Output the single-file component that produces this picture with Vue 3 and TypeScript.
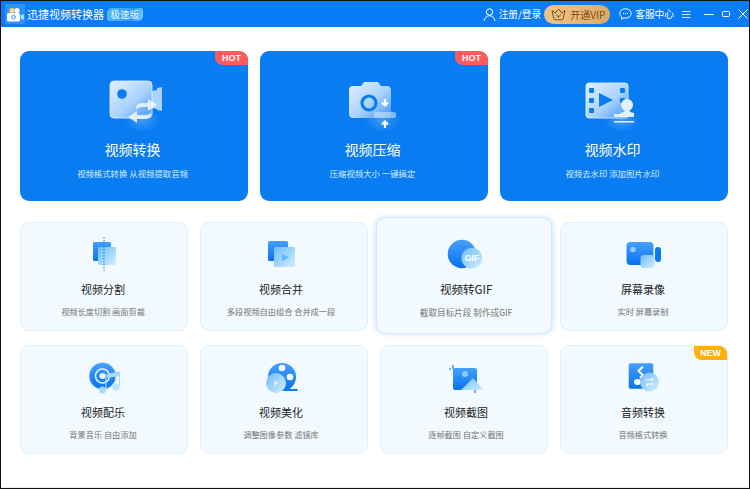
<script setup lang="ts">
type Tool = {
  id: string;
  title: string;
  desc: string;
  badge?: "HOT" | "NEW";
  active?: boolean;
};

const mainTools: Tool[] = [
  { id: "convert", title: "视频转换", desc: "视频格式转换 从视频提取音频", badge: "HOT" },
  { id: "compress", title: "视频压缩", desc: "压缩视频大小 一键搞定", badge: "HOT" },
  { id: "watermark", title: "视频水印", desc: "视频去水印 添加图片水印" }
];

const tools: Tool[] = [
  { id: "split", title: "视频分割", desc: "视频长度切割 画面剪裁" },
  { id: "merge", title: "视频合并", desc: "多段视频自由组合 合并成一段" },
  { id: "gif", title: "视频转GIF", desc: "截取目标片段 制作成GIF", active: true },
  { id: "record", title: "屏幕录像", desc: "实时 屏幕录制" },
  { id: "music", title: "视频配乐", desc: "背景音乐 自由添加" },
  { id: "beautify", title: "视频美化", desc: "调整图像参数 滤镜库" },
  { id: "shot", title: "视频截图", desc: "逐帧截图 自定义截图" },
  { id: "audio", title: "音频转换", desc: "音频格式转换", badge: "NEW" }
];
</script>

<template>
  <div class="window">
    <header class="titlebar">
      <div class="brand">
        <span class="logo" aria-hidden="true">
          <svg width="18" height="15" viewBox="0 0 18 15">
            <circle cx="6" cy="3.500" r="2.600" fill="#ffd36b" />
            <circle cx="11" cy="3.500" r="2.600" fill="#fff" />
            <rect x="1" y="6" width="13" height="8.500" rx="1.500" fill="#fff" />
            <path d="M14.500 8.500 18 7v6l-3.500-1.500z" fill="#9fe0ff" />
            <circle cx="7.500" cy="10.200" r="1.800" fill="none" stroke="#2b8cf5" />
          </svg>
        </span>
        <span class="app-name">迅捷视频转换器</span>
        <span class="edition">极速版</span>
      </div>
      <div class="actions">
        <span class="action login">
          <svg width="13" height="13" viewBox="0 0 13 13" fill="none" stroke="#fff" stroke-width="1">
            <circle cx="6.500" cy="4" r="3.200" />
            <path d="M1 12.800c.6-3 2.800-5.100 5.500-5.100s4.900 2.100 5.500 5.100" />
          </svg>
          注册/登录
        </span>
        <button type="button" class="vip">
          <svg width="15" height="13" viewBox="0 0 15 13" fill="none" stroke="#7c4d1c" stroke-width="1">
            <path d="M1 2.500 4.300 5 7.500 1l3.200 4L14 2.500l-1.800 8.200a1.500 1.500 0 0 1-1.400 1.100H4.200a1.500 1.500 0 0 1-1.400-1.100z" />
            <path d="M5.500 6.500 7.500 9.500l2-3" />
          </svg>
          开通VIP
        </button>
        <span class="action service">
          <svg width="13" height="12" viewBox="0 0 13 12" fill="none" stroke="#fff" stroke-width="1">
            <path d="M6.500 .8c3.200 0 5.700 2.100 5.700 4.700s-2.500 4.600-5.700 4.600c-.6 0-1.100 0-1.600-.2L2.600 11.300l.2-2.200C1.500 8.200.8 6.900.8 5.500.8 2.900 3.300.8 6.500.8z" />
            <path d="M4 5.500h1M6 5.500h1M8 5.500h1" />
          </svg>
          客服中心
        </span>
        <div class="window-controls" aria-hidden="true">
          <svg width="9" height="9" viewBox="0 0 9 9" stroke="#d7eaff" fill="none"><path d="M0 1.500h8.500M0 4.500h8.500M0 7.500h8.500" /></svg>
          <svg class="min" width="10" height="10" viewBox="0 0 10 10" stroke="#fff" fill="none"><path d="M0 5.500h9.500" /></svg>
          <svg class="max" width="10" height="10" viewBox="0 0 10 10" stroke="#fff" fill="none"><rect x="1.500" y="2.500" width="7" height="5" rx="1" /></svg>
          <svg class="close" width="10" height="10" viewBox="0 0 10 10" stroke="#fff" fill="none"><path d="m.5.500 9 9m0-9-9 9" /></svg>
        </div>
      </div>
    </header>

    <main class="content">
      <section class="main-tools">
        <article v-for="tool in mainTools" :key="tool.id" class="main-card">
          <span v-if="tool.badge" class="badge hot">{{ tool.badge }}</span>
          <svg class="main-icon" width="60" height="60" viewBox="0 0 60 60" aria-hidden="true">
            <defs>
              <linearGradient :id="`main-${tool.id}`" x1="0" y1="0" x2="1" y2="1">
                <stop offset="0" stop-color="#e2f0ff" />
                <stop offset=".55" stop-color="#aad3fd" />
                <stop offset="1" stop-color="#3f96f6" />
              </linearGradient>
              <radialGradient :id="`glow-${tool.id}`">
                <stop offset="0" stop-color="#fff" stop-opacity=".22" />
                <stop offset="1" stop-color="#fff" stop-opacity="0" />
              </radialGradient>
            </defs>
            <ellipse cx="38" cy="44" rx="18" ry="12" :fill="`url(#glow-${tool.id})`" />
            <template v-if="tool.id === 'convert'">
              <path d="M48 15l5-1v-2l5-1v24l-5-1v-1l-5-1z" fill="#a9d2fd" />
              <rect x="6" y="5" width="42" height="37" rx="4" :fill="`url(#main-${tool.id})`" stroke="#eaf4ff" stroke-width=".8" />
              <circle cx="18" cy="18" r="4.800" fill="#0a7cf2" />
              <path d="M32 34v-2c0-3 3-5 6-5h6v-4l9 6-9 6v-4h-6c-3 0-5 1-6 3z" fill="#fff" opacity=".78" />
              <path d="M47 36v2c0 3-3 5-6 5h-8v4l-9-6 9-6v4h8c3 0 5-1 6-3z" fill="#fff" opacity=".78" />
            </template>
            <template v-else-if="tool.id === 'compress'">
              <path d="M5 14a4 4 0 0 1 4-4h8l3-4h14l3 4h6a4 4 0 0 1 4 4v24a4 4 0 0 1-4 4H9a4 4 0 0 1-4-4z" :fill="`url(#main-${tool.id})`" />
              <circle cx="25" cy="27" r="7" fill="none" stroke="#0a7cf2" stroke-width="3.200" />
              <path d="M41 23v6m-3-2.500 3 3 3-3" stroke="#fff" stroke-width="2.200" fill="none" />
              <rect x="30" y="36" width="22" height="6" rx="2" fill="#d8eaff" opacity=".55" />
              <path d="M41 52v-6m-3 2.500 3-3 3 3" stroke="#fff" stroke-width="2.200" fill="none" />
            </template>
            <template v-else>
              <rect x="2" y="7" width="42" height="35" rx="3" :fill="`url(#main-${tool.id})`" stroke="#eaf4ff" stroke-width=".8" />
              <g fill="#0a7cf2">
                <rect x="5" y="12" width="5" height="5" rx="1" />
                <rect x="5" y="22" width="5" height="5" rx="1" />
                <rect x="5" y="32" width="5" height="5" rx="1" />
                <rect x="36" y="12" width="5" height="5" rx="1" />
                <rect x="36" y="22" width="5" height="5" rx="1" />
                <path d="M15 17l14 7-14 7z" />
              </g>
              <circle cx="43" cy="29" r="6" fill="#e4f1ff" />
              <path d="M41 33h4l1 3 4 1v1.500H36V37l4-1z" fill="#e4f1ff" />
              <rect x="30" y="38" width="20" height="3" rx="1" fill="#e4f1ff" />
              <rect x="30" y="45" width="20" height="1.500" fill="#e4f1ff" />
            </template>
          </svg>
          <h2>{{ tool.title }}</h2>
          <p>{{ tool.desc }}</p>
        </article>
      </section>

      <section class="tools">
        <article v-for="tool in tools" :key="tool.id" class="tool-card" :class="{ active: tool.active }">
          <span v-if="tool.badge" class="badge new">{{ tool.badge }}</span>
          <svg class="tool-icon" width="40" height="40" viewBox="0 0 40 40" aria-hidden="true">
            <defs>
              <linearGradient :id="`dark-${tool.id}`" x1="0" y1="0" x2="0" y2="1">
                <stop offset="0" stop-color="#47a0fb" />
                <stop offset="1" stop-color="#0672f0" />
              </linearGradient>
              <linearGradient :id="`light-${tool.id}`" x1="0" y1="0" x2="1" y2="1">
                <stop offset="0" stop-color="#6fbcfd" />
                <stop offset="1" stop-color="#d3eeff" />
              </linearGradient>
            </defs>
            <template v-if="tool.id === 'split'">
              <rect x="9" y="8" width="18" height="19" rx="1.500" :fill="`url(#dark-${tool.id})`" />
              <rect x="14" y="13" width="18" height="18" rx="1.500" :fill="`url(#light-${tool.id})`" />
              <path d="M20 3v34" stroke="#0a7cf2" stroke-dasharray="1.500 1.500" />
            </template>
            <template v-else-if="tool.id === 'merge'">
              <rect x="4" y="7" width="20" height="20" rx="1.500" :fill="`url(#dark-${tool.id})`" />
              <rect x="10" y="13" width="21" height="20" rx="1.500" :fill="`url(#light-${tool.id})`" />
              <path d="M18 20l7 3.500-7 3.500z" fill="#5fb6fd" />
            </template>
            <template v-else-if="tool.id === 'gif'">
              <circle cx="18" cy="21" r="13.500" :fill="`url(#dark-${tool.id})`" />
              <circle cx="27.500" cy="25" r="10" :fill="`url(#light-${tool.id})`" />
              <text x="27.500" y="28" text-anchor="middle" class="gif-text">GIF</text>
            </template>
            <template v-else-if="tool.id === 'record'">
              <rect x="2.500" y="8" width="27" height="23" rx="4" :fill="`url(#dark-${tool.id})`" />
              <rect x="31" y="13" width="6" height="15" rx="3" fill="#0a7cf2" />
              <circle cx="9" cy="15.500" r="2.800" fill="#8ccbfe" />
              <rect x="16.500" y="21" width="14" height="13" rx="3" :fill="`url(#light-${tool.id})`" />
            </template>
            <template v-else-if="tool.id === 'music'">
              <circle cx="18.500" cy="19" r="13.500" :fill="`url(#dark-${tool.id})`" stroke="#bfe2ff" stroke-width=".8" />
              <circle cx="18.500" cy="19" r="7" fill="none" stroke="#e9f5ff" stroke-width="1.500" />
              <circle cx="18.500" cy="19" r="3" fill="#e9f5ff" />
              <path d="M23 17l13-2.500v4.500L23 21z" fill="#a9d8fe" />
              <path d="M22 17v15M35.500 14.500v15" stroke="#a9d8fe" stroke-width="1.200" />
              <circle cx="18.500" cy="33" r="3.500" fill="#a9d8fe" />
              <circle cx="32" cy="30" r="3.500" fill="#bfe2ff" />
            </template>
            <template v-else-if="tool.id === 'beautify'">
              <circle cx="18" cy="20" r="14" :fill="`url(#dark-${tool.id})`" />
              <circle cx="18" cy="11" r="3.300" fill="#f3faff" />
              <circle cx="26" cy="20" r="3.300" fill="#f3faff" />
              <path d="M21 33h12.500" stroke="#0a7cf2" stroke-width="1.800" />
              <circle cx="12" cy="26" r="10" :fill="`url(#light-${tool.id})`" />
              <path d="M10 23l5 3-5 3z" fill="#d9f0ff" />
            </template>
            <template v-else-if="tool.id === 'shot'">
              <rect x="9" y="11" width="24" height="22" rx="2" :fill="`url(#dark-${tool.id})`" />
              <path d="M9 8v4M31 33v3" stroke="#0a7cf2" stroke-width="1.200" />
              <circle cx="6" cy="12" r="1" fill="#4aa5fb" />
              <circle cx="21" cy="17" r="3" fill="#8ccbfe" />
              <path d="M17 33l12-12 11 12z" :fill="`url(#light-${tool.id})`" />
            </template>
            <template v-else>
              <rect x="4.500" y="6" width="25" height="26" rx="2" :fill="`url(#dark-${tool.id})`" stroke="#dff1ff" stroke-width=".6" />
              <path d="M19 9.500 14.500 14l4.500 4-3 3" stroke="#fff" stroke-width="2" fill="none" />
              <ellipse cx="13.500" cy="25" rx="3.500" ry="3" fill="#fff" />
              <circle cx="25.500" cy="25" r="9.500" :fill="`url(#light-${tool.id})`" />
              <path d="M21 23h8m-2-2 2 2M30 27h-8m2 2-2-2" stroke="#fff" stroke-width="1.200" fill="none" />
            </template>
          </svg>
          <h3>{{ tool.title }}</h3>
          <p>{{ tool.desc }}</p>
        </article>
      </section>
    </main>
  </div>
</template>

<style>
body {
  margin: 0;
  background: #fff;
}
</style>

<style scoped>
.window {
  width: 750px;
  height: 489px;
  box-sizing: border-box;
  border: 1px solid #111;
  background: #fff;
  box-shadow: inset 0 -1px 0 #eee;
  overflow: hidden;
  font-family: "Noto Sans CJK SC", "Noto Sans", sans-serif;
}

.titlebar {
  height: 26px;
  display: flex;
  align-items: center;
  justify-content: space-between;
  background: #0a7cfa;
  color: #fff;
}

.brand,
.actions,
.action,
.vip,
.window-controls {
  display: flex;
  align-items: center;
}

.brand {
  padding-left: 4px;
}

.logo {
  width: 20px;
  height: 20px;
  display: grid;
  place-items: center;
  background: rgba(255, 255, 255, 0.16);
}

.app-name {
  margin-left: 2px;
  font-size: 11px;
}

.edition {
  margin-left: 3px;
  padding: 0 3.500px;
  height: 13px;
  line-height: 13px;
  font-size: 9.500px;
  color: #e6f5ff;
  background: linear-gradient(100deg, #58b9fb, #2a9bf9 70%, #7fd0fb);
  border-radius: 5px 2px 5px 2px;
}

.actions {
  font-size: 9.700px;
}

.action {
  gap: 3px;
}

.vip {
  margin-left: 3px;
  width: 66px;
  height: 19px;
  padding: 0 0 0 7px;
  gap: 4px;
  border: 0;
  border-radius: 10px;
  background: linear-gradient(105deg, #eec48a, #e6b877 55%, #d9a764);
  color: #7c4d1c;
  font: inherit;
  font-size: 10px;
}

.service {
  margin-left: 9px;
}

.window-controls {
  margin-left: 8px;
  padding-right: 1px;
}

.window-controls .min {
  margin-left: 13px;
}

.window-controls .max {
  margin-left: 7px;
}

.window-controls .close {
  margin-left: 7px;
}

.content {
  width: 708px;
  margin-left: 19px;
  padding-top: 24px;
}

.main-tools {
  display: grid;
  grid-template-columns: repeat(3, 228px);
  gap: 12px;
}

.main-card {
  position: relative;
  height: 150px;
  box-sizing: border-box;
  padding-top: 25px;
  display: flex;
  flex-direction: column;
  align-items: center;
  border-radius: 9px;
  background: #0a7cf2;
  color: #fff;
  overflow: hidden;
}

.main-icon {
  display: block;
}

.main-card h2 {
  margin: 4px 3px 0 0;
  font-size: 14px;
  line-height: 18px;
  font-weight: 400;
}

.main-card p {
  margin: 9px 3px 0 0;
  font-size: 8.400px;
  line-height: 12px;
  color: #d9ecff;
}

.badge {
  position: absolute;
  top: 0;
  right: 0;
  width: 33px;
  height: 14px;
  font-family: "Liberation Sans", Arial, sans-serif;
  font-size: 9px;
  font-weight: 700;
  line-height: 14px;
  text-align: center;
  color: #fff;
  border-bottom-left-radius: 8px;
}

.badge.hot {
  background: #ff5b5b;
}

.badge.new {
  background: #ffb000;
}

.tools {
  margin-top: 21px;
  display: grid;
  grid-template-columns: repeat(4, 168px);
  grid-auto-rows: 109px;
  column-gap: 12px;
  row-gap: 14px;
}

.tool-card {
  position: relative;
  box-sizing: border-box;
  padding-top: 11px;
  display: flex;
  flex-direction: column;
  align-items: center;
  border: 1px solid #dff0fe;
  border-radius: 9px;
  background: #f2faff;
  overflow: hidden;
}

.tool-card.active {
  margin-top: -2px;
  padding-top: 13px;
  transform: scale(1.05);
  border-color: #d5eafe;
  box-shadow: 0 0 5px rgba(140, 195, 250, 0.45);
}

.tool-icon {
  display: block;
}

.gif-text {
  font-family: "Liberation Sans", Arial, sans-serif;
  font-size: 8.500px;
  font-weight: 700;
  fill: #fff;
}

.tool-card h3 {
  margin: 7px 0 0;
  font-size: 11px;
  line-height: 16px;
  font-weight: 400;
  color: #222;
}

.tool-card p {
  margin: 8px 0 0;
  font-size: 8.200px;
  line-height: 12px;
  color: #757575;
}

/* the copy is not quite centred in the source, it drifts per column */
.tool-card:nth-child(4n + 1) h3,
.tool-card:nth-child(4n + 1) p {
  margin-right: 2px;
}

.tool-card:nth-child(4n + 2) h3,
.tool-card:nth-child(4n + 2) p {
  margin-right: 6px;
}

.tool-card:nth-child(4n + 3) h3,
.tool-card:nth-child(4n + 3) p {
  margin-left: 4px;
}

.tool-card:nth-child(4n) h3,
.tool-card:nth-child(4n) p {
  margin-right: 2px;
}

.tool-card.active h3 {
  margin-top: 6px;
}
</style>
